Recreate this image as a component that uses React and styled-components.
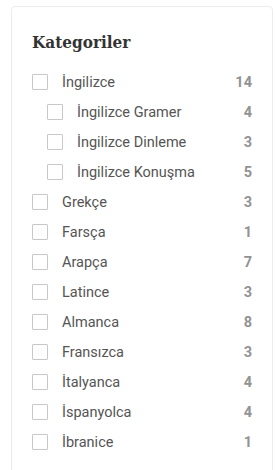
import styled, { createGlobalStyle } from 'styled-components';

const GlobalStyle = createGlobalStyle`
  body {
    margin: 0;
    background: #fff;
    font-family: Roboto, "Noto Sans", sans-serif;
  }
`;

const categories = [
  {
    name: 'İngilizce',
    count: 14,
    children: [
      { name: 'İngilizce Gramer', count: 4 },
      { name: 'İngilizce Dinleme', count: 3 },
      { name: 'İngilizce Konuşma', count: 5 },
    ],
  },
  { name: 'Grekçe', count: 3 },
  { name: 'Farsça', count: 1 },
  { name: 'Arapça', count: 7 },
  { name: 'Latince', count: 3 },
  { name: 'Almanca', count: 8 },
  { name: 'Fransızca', count: 3 },
  { name: 'İtalyanca', count: 4 },
  { name: 'İspanyolca', count: 4 },
  { name: 'İbranice', count: 1 },
];

// the card runs on below the window, as in the screenshot
const Page = styled.div`
  height: 100vh;
  overflow: hidden;
  padding: 6px 2px 0 11px;
  box-sizing: border-box;
`;

const Card = styled.div`
  border: 1px solid #ececec;
  border-radius: 4px;
  padding: 22px 20px 40px 20px;
`;

const Title = styled.h3`
  margin: 0 0 12px 0;
  font-family: "DejaVu Serif", "Liberation Serif", serif;
  font-stretch: condensed;
  font-weight: 700;
  font-size: 17px;
  line-height: 26px;
  color: #333;
`;

const List = styled.ul`
  list-style: none;
  margin: 0;
  padding: 0;
`;

const Row = styled.li`
  display: flex;
  align-items: center;
  height: 30px;
  padding-left: ${(p) => (p.$nested ? '15px' : '0')};
`;

const Box = styled.span`
  width: 16px;
  height: 16px;
  box-sizing: border-box;
  border: 1px solid #c8c8c8;
  border-radius: 1px;
  flex-shrink: 0;
  margin-right: 14px;
`;

const Name = styled.span`
  flex: 1;
  font-size: 14.5px;
  color: #555;
`;

const Count = styled.span`
  font-size: 14.5px;
  font-weight: 700;
  color: #929292;
`;

const Item = ({ name, count, nested }) => (
  <Row $nested={nested}>
    <Box />
    <Name>{name}</Name>
    <Count>{count}</Count>
  </Row>
);

export default function App() {
  return (
    <Page>
      <GlobalStyle />
      <Card>
        <Title>Kategoriler</Title>
        <List>
          {categories.map((c) => [
            <Item key={c.name} name={c.name} count={c.count} />,
            ...(c.children || []).map((s) => (
              <Item key={s.name} name={s.name} count={s.count} nested />
            )),
          ])}
        </List>
      </Card>
    </Page>
  );
}
